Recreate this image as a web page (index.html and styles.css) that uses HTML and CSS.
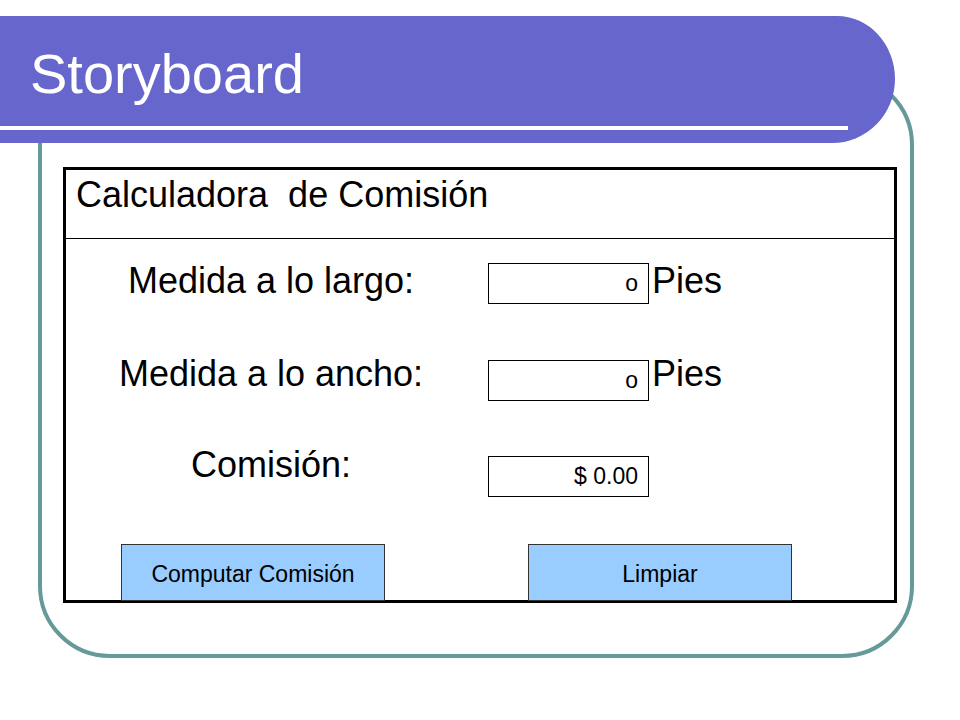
FILE: index.html
```html
<!DOCTYPE html>
<html lang="es">
<head>
<meta charset="utf-8">
<title>Storyboard</title>
<link rel="stylesheet" href="styles.css">
</head>
<body>
<div class="slide">
  <header class="title-bar">
    <h1 class="title">Storyboard</h1>
    <div class="title-rule"></div>
  </header>
  <div class="frame">
    <div class="window">
      <div class="window-header">Calculadora&nbsp; de Comisión</div>
      <div class="window-body">
        <div class="row row-1">
          <div class="label">Medida a lo largo:</div>
          <div class="field field-1">o</div>
          <div class="unit">Pies</div>
        </div>
        <div class="row row-2">
          <div class="label">Medida a lo ancho:</div>
          <div class="field field-2">o</div>
          <div class="unit">Pies</div>
        </div>
        <div class="row row-3">
          <div class="label">Comisión:</div>
          <div class="field field-3">$ 0.00</div>
        </div>
        <div class="buttons">
          <div class="btn">Computar Comisión</div>
          <div class="btn">Limpiar</div>
        </div>
      </div>
    </div>
  </div>
</div>
</body>
</html>
```
FILE: styles.css
```css
html, body {
  margin: 0;
  padding: 0;
  background: #ffffff;
}

body {
  font-family: "Liberation Sans", Arial, sans-serif;
  color: #000000;
}

.slide {
  width: 960px;
  height: 720px;
  box-sizing: border-box;
  padding-top: 16px;
  overflow: hidden;
}

.title-bar {
  position: relative;
  z-index: 1;
  width: 895px;
  height: 127px;
  box-sizing: border-box;
  padding-top: 26px;
  background: #6666cc;
  border-radius: 0 58px 63px 0 / 0 63px 64px 0;
}

.title {
  margin: 0;
  padding-left: 30px;
  font-size: 56px;
  line-height: 64px;
  font-weight: normal;
  color: #ffffff;
}

.title-rule {
  margin-top: 20px;
  width: 848px;
  height: 4px;
  background: #ffffff;
}

.frame {
  margin-top: -70px;
  margin-left: 38px;
  width: 876px;
  height: 585px;
  box-sizing: border-box;
  border: 4px solid #669999;
  border-radius: 72px;
  padding: 90px 0 0 21px;
}

.window {
  width: 834px;
  height: 436px;
  box-sizing: border-box;
  border: 3px solid #000000;
  background: #ffffff;
}

.window-header {
  height: 69px;
  box-sizing: border-box;
  border-bottom: 1px solid #000000;
  padding: 5px 0 0 10px;
  font-size: 36px;
  line-height: 40px;
}

.window-body {
  padding-top: 22px;
}

.row {
  display: flex;
  align-items: flex-start;
}

.row-1 { height: 93px; }
.row-2 { height: 91px; }
.row-3 { height: 99px; }

.label {
  width: 410px;
  text-align: center;
  font-size: 36px;
  line-height: 40px;
}

.field {
  margin-left: 12px;
  width: 161px;
  height: 41px;
  box-sizing: border-box;
  border: 1px solid #000000;
  padding-right: 10px;
  text-align: right;
  font-size: 23px;
  line-height: 39px;
}

.field-1 { margin-top: 2px; }
.field-2 { margin-top: 6px; }
.field-3 { margin-top: 11px; }

.unit {
  margin-left: 3px;
  font-size: 36px;
  line-height: 40px;
}

.buttons {
  display: flex;
  gap: 143px;
  padding-left: 55px;
}

.btn {
  width: 264px;
  height: 57px;
  box-sizing: border-box;
  padding-top: 4px;
  display: flex;
  align-items: center;
  justify-content: center;
  background: #99ccff;
  border: 1px solid #333333;
  font-size: 23px;
}
```
